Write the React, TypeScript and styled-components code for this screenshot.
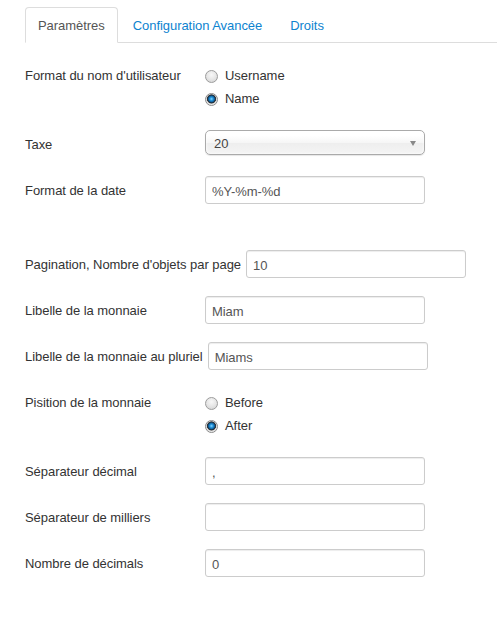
import React from "react";
import styled, { createGlobalStyle, css } from "styled-components";

const GlobalStyle = createGlobalStyle`
  html, body {
    margin: 0;
    padding: 0;
    background: #fff;
  }
  body {
    font-family: "Liberation Sans", Arial, Helvetica, sans-serif;
    font-size: 13px;
    line-height: 18px;
    color: #333;
    letter-spacing: -0.05px;
  }
`;

const Page = styled.div`
  padding: 7px 0 40px 25px;
`;

const Tabs = styled.ul`
  display: flex;
  list-style: none;
  margin: 0 0 18px 0;
  padding: 0;
  border-bottom: 1px solid #ddd;
`;

const TabItem = styled.li`
  margin-bottom: -1px;
`;

const TabLink = styled.a<{ $active?: boolean }>`
  display: block;
  padding: 9px 12px 7px;
  margin-right: 2px;
  line-height: 18px;
  border: 1px solid transparent;
  border-radius: 4px 4px 0 0;
  color: #0d83cf;
  text-decoration: none;
  cursor: pointer;
  ${(p) =>
    p.$active &&
    css`
      color: #555;
      background: #fff;
      border-color: #ddd #ddd transparent;
    `}
`;

const ControlGroup = styled.div`
  display: flex;
  align-items: flex-start;
  margin-bottom: 18px;
`;

const Spacer = styled.div`
  height: 28px;
`;

const Label = styled.label`
  flex: none;
  box-sizing: border-box;
  min-width: 180px;
  padding: 6px 5px 0 0;
  line-height: 18px;
  color: #333;
  white-space: nowrap;
`;

const TextInput = styled.input`
  box-sizing: border-box;
  width: 220px;
  height: 28px;
  margin: 0;
  padding: 5px 6px 3px;
  font-family: "Liberation Sans", Arial, Helvetica, sans-serif;
  font-size: 13px;
  line-height: 18px;
  letter-spacing: -0.05px;
  color: #555;
  background: #fff;
  border: 1px solid #ccc;
  border-radius: 3px;
  box-shadow: inset 0 1px 1px rgba(0, 0, 0, 0.075);
  outline: none;
`;

const SelectWrap = styled.div`
  height: 28px;
`;

const SelectBox = styled.div`
  position: relative;
  box-sizing: border-box;
  width: 220px;
  height: 25px;
  padding: 1px 0 0 8px;
  line-height: 23px;
  color: #444;
  border: 1px solid #aaa;
  border-radius: 5px;
  background: linear-gradient(#ffffff 20%, #f6f6f6 50%, #eeeeee 52%, #f4f4f4 100%);
  box-shadow: inset 0 0 3px #fff, 0 1px 1px rgba(0, 0, 0, 0.1);
`;

const Arrow = styled.span`
  position: absolute;
  right: 8px;
  top: 10px;
  width: 0;
  height: 0;
  border-left: 3.5px solid transparent;
  border-right: 3.5px solid transparent;
  border-top: 5px solid #888;
`;

const RadioGroup = styled.div`
  display: flex;
  flex-direction: column;
  gap: 5px;
  padding: 6px 0 4px 0;
`;

const RadioRow = styled.label`
  display: flex;
  align-items: center;
  line-height: 18px;
  color: #333;
  cursor: pointer;
`;

const RadioDot = styled.span<{ $checked?: boolean }>`
  flex: none;
  box-sizing: border-box;
  width: 13px;
  height: 13px;
  margin: 0 7px 0 0;
  border-radius: 50%;
  border: 1px solid #9c9c9c;
  background: radial-gradient(circle at 50% 35%, #f8f8f8 0%, #e6e6e6 50%, #cfcfcf 100%);
  ${(p) =>
    p.$checked &&
    css`
      border-color: #8a8a8a;
      background: radial-gradient(
        circle at 50% 45%,
        #8fd8ff 0px,
        #2a9be0 1.5px,
        #0f5f9c 3px,
        #1b2d3d 3.8px,
        #3a3a3a 4.3px,
        #d6d6d6 4.8px,
        #f2f2f2 6px
      );
    `}
`;

type RadioOpt = { label: string; checked?: boolean };

const RadioField: React.FC<{ label: string; options: RadioOpt[] }> = ({ label, options }) => (
  <ControlGroup>
    <Label>{label}</Label>
    <RadioGroup>
      {options.map((o) => (
        <RadioRow key={o.label}>
          <RadioDot $checked={o.checked} />
          {o.label}
        </RadioRow>
      ))}
    </RadioGroup>
  </ControlGroup>
);

const TextField: React.FC<{ label: string; value: string }> = ({ label, value }) => (
  <ControlGroup>
    <Label>{label}</Label>
    <TextInput type="text" defaultValue={value} />
  </ControlGroup>
);

export default function App() {
  return (
    <>
      <GlobalStyle />
      <Page>
        <Tabs>
          <TabItem>
            <TabLink $active>Paramètres</TabLink>
          </TabItem>
          <TabItem>
            <TabLink>Configuration Avancée</TabLink>
          </TabItem>
          <TabItem>
            <TabLink>Droits</TabLink>
          </TabItem>
        </Tabs>

        <RadioField
          label="Format du nom d'utilisateur"
          options={[{ label: "Username" }, { label: "Name", checked: true }]}
        />

        <ControlGroup>
          <Label>Taxe</Label>
          <SelectWrap>
            <SelectBox>
              20
              <Arrow />
            </SelectBox>
          </SelectWrap>
        </ControlGroup>

        <TextField label="Format de la date" value="%Y-%m-%d" />
        <Spacer />
        <TextField label="Pagination, Nombre d'objets par page" value="10" />
        <TextField label="Libelle de la monnaie" value="Miam" />
        <TextField label="Libelle de la monnaie au pluriel" value="Miams" />

        <RadioField
          label="Pisition de la monnaie"
          options={[{ label: "Before" }, { label: "After", checked: true }]}
        />

        <TextField label="Séparateur décimal" value="," />
        <TextField label="Séparateur de milliers" value="" />
        <TextField label="Nombre de décimals" value="0" />
      </Page>
    </>
  );
}
